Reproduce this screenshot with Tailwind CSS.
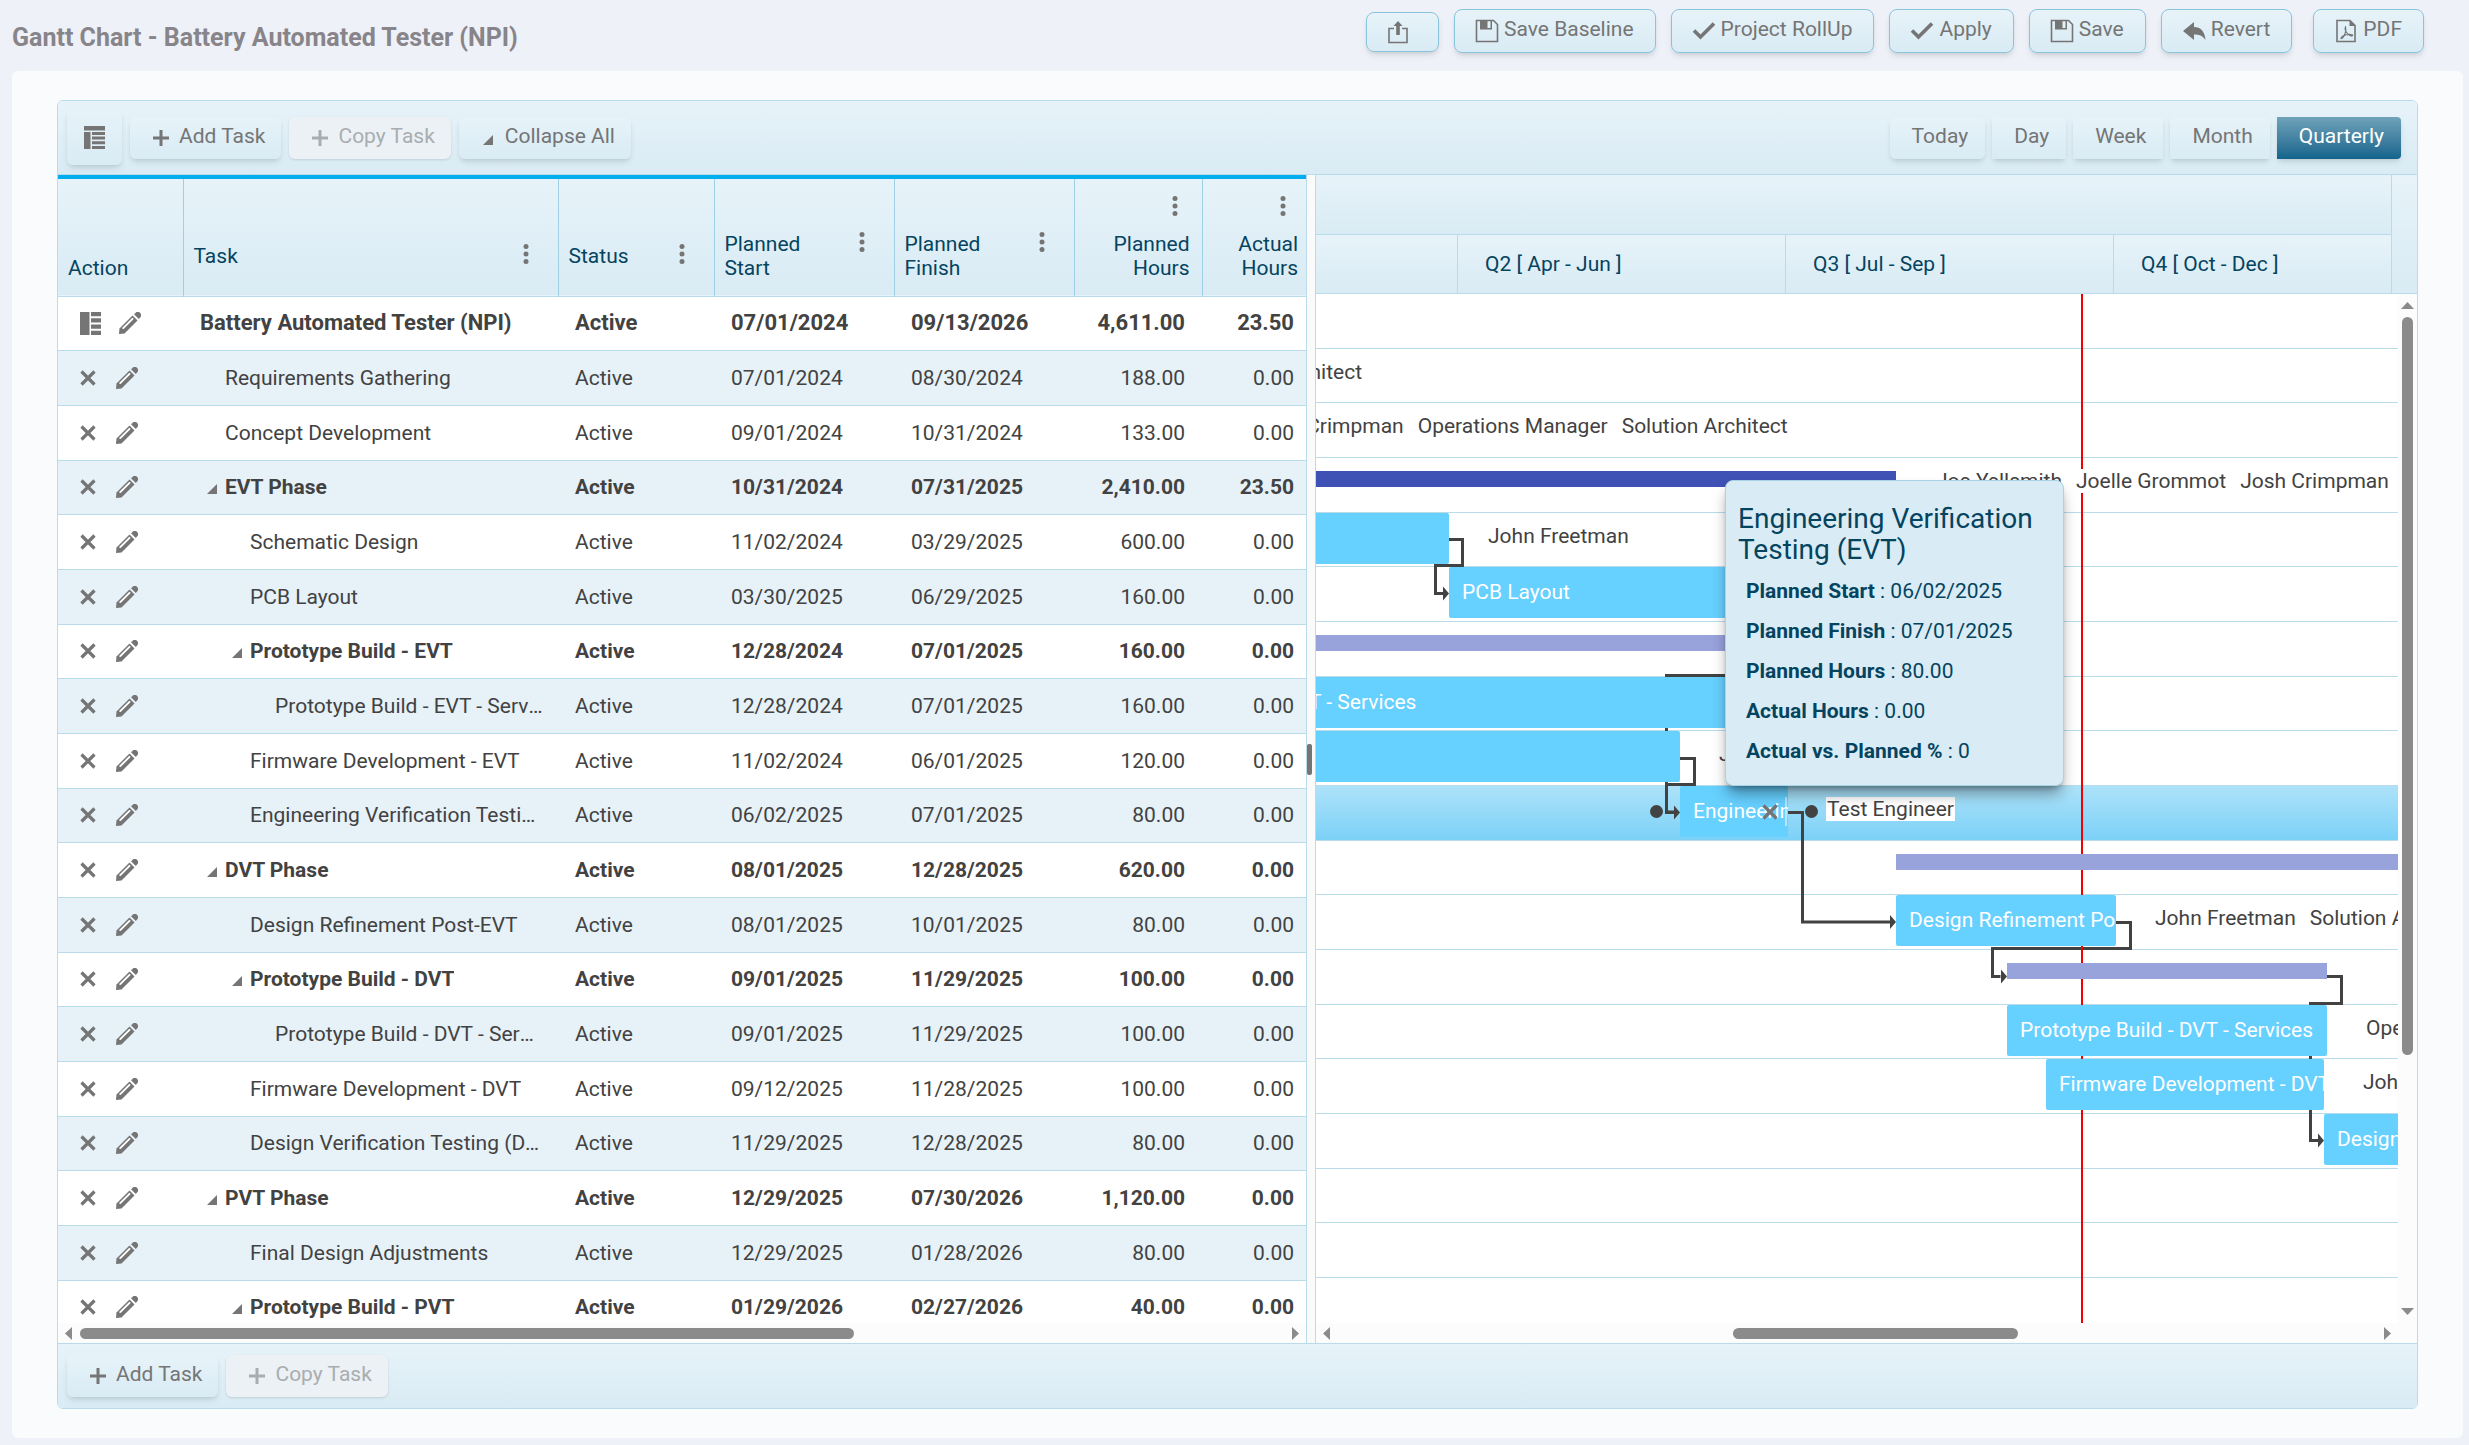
<!DOCTYPE html>
<html lang="en">
<head>
    <meta charset="UTF-8">
    <title>Gantt Chart - Battery Automated Tester (NPI)</title>
    <script src="https://cdn.jsdelivr.net/npm/@tailwindcss/browser@4"></script>
</head>
<body class="bg-[#eef1f7] h-screen flex flex-col overflow-hidden font-['Roboto',sans-serif] text-[21px] leading-6 text-[#424242]">

<!-- Icons -->
<svg class="hidden">
    <symbol id="i-share" viewBox="0 0 24 24"><path d="M8 8.500H3v14h18v-14h-5" fill="none" stroke="currentColor" stroke-width="1.600"/><path d="M12 1l4.500 5h-2.700v9h-3.600V6H7.500z" fill="currentColor"/></symbol>
    <symbol id="i-save" viewBox="0 0 24 24"><path d="M1.500 1.500h17l4 4v17h-21z" fill="none" stroke="currentColor" stroke-width="1.600"/><path d="M5 1.500h7.500V10H5zM15.500 1.500H17V10h-1.500zM5 9h12v1.400H5z" fill="currentColor"/></symbol>
    <symbol id="i-check" viewBox="0 0 24 24"><path d="M2 11.500l6.500 6.500L22 4.500" fill="none" stroke="currentColor" stroke-width="3.600"/></symbol>
    <symbol id="i-undo" viewBox="0 0 24 24"><path d="M1 12L12 3v5c6.500 0 11 4.500 11.500 13-3-4.500-6.500-5.500-11.500-5.500V21z" fill="currentColor"/></symbol>
    <symbol id="i-pdf" viewBox="0 0 24 24"><path d="M3 1.500h13l5 5v16H3z" fill="none" stroke="currentColor" stroke-width="1.600"/><path d="M15.500 1l6 6h-6z" fill="currentColor"/><path d="M11.500 8c-.8 1.500.2 4.500 2 6.500s4 3 5 2-3.500-1.500-6-.8-5.500 2.300-5.500 3.500 2-.2 3-2.200 2.400-6 1.500-9z" fill="none" stroke="currentColor" stroke-width="1.100"/></symbol>
    <symbol id="i-plus" viewBox="0 0 16 16"><path d="M8 0v16M0 8h16" stroke="currentColor" stroke-width="3"/></symbol>
    <symbol id="i-tri" viewBox="0 0 10 10"><path d="M10 0v10H0z" fill="currentColor"/></symbol>
    <symbol id="i-x" viewBox="0 0 16 16"><path d="M1.500 1.500l13 13M14.500 1.500l-13 13" stroke="currentColor" stroke-width="3.200"/></symbol>
    <symbol id="i-pencil" viewBox="0 0 22 22"><path d="M13.500 3.500l5 5L5.500 21.500 0 22l.5-5.500z" fill="currentColor"/><path d="M13.500 6.800L4.200 16.100" stroke="#fff" stroke-width="1.900" stroke-linecap="round"/><path d="M15 2.200L16.500.9a3.200 3.200 0 0 1 4.600 4.600L19.800 7z" fill="currentColor"/></symbol>
    <symbol id="i-layout" viewBox="0 0 21 23"><path d="M0 0h9.500v23H0zM11 0h10v4.300H11zM11 6.200h10v4.300H11zM11 12.500h10v4.300H11zM11 18.700h10V23H11z" fill="currentColor"/></symbol>
    <symbol id="i-columns" viewBox="0 0 21 23"><path d="M0 0h21v4.500H0zM0 6h6.500v17H0zM8 6h13v3H8zM8 10.500h13v3H8zM8 15.300h13v3H8zM8 20h13v3H8z" fill="currentColor"/></symbol>
    <symbol id="i-dots" viewBox="0 0 6 20"><circle cx="3" cy="2.500" r="2.500"/><circle cx="3" cy="10" r="2.500"/><circle cx="3" cy="17.500" r="2.500"/></symbol>
</svg>

<!-- Page header -->
<header class="h-[71px] shrink-0 flex items-start justify-between pl-3 pr-[45px] pt-[9px] text-[#757575]">
    <h1 class="text-[25px] leading-8 font-bold text-[#87848a] pt-[13px]">Gantt Chart - Battery Automated Tester (NPI)</h1>
    <div class="flex gap-[15px]">
        <button aria-label="Export" class="mt-[3px] h-10 w-[73px] pr-[10px] flex items-center justify-center rounded-lg border border-[#89c4dd] bg-linear-to-b from-[#e7f3f9] to-[#d9ebf4] shadow-md"><svg class="size-6"><use href="#i-share"/></svg></button>
        <button class="h-11 pl-5 pr-[21px] flex items-center gap-[5px] rounded-lg border border-[#89c4dd] bg-linear-to-b from-[#e7f3f9] to-[#d9ebf4] shadow-md"><svg class="size-6"><use href="#i-save"/></svg><span class="pb-1">Save Baseline</span></button>
        <button class="h-11 pl-5 pr-[21px] flex items-center gap-[5px] rounded-lg border border-[#89c4dd] bg-linear-to-b from-[#e7f3f9] to-[#d9ebf4] shadow-md"><svg class="size-6"><use href="#i-check"/></svg><span class="pb-1">Project RollUp</span></button>
        <button class="h-11 pl-5 pr-[21px] flex items-center gap-[5px] rounded-lg border border-[#89c4dd] bg-linear-to-b from-[#e7f3f9] to-[#d9ebf4] shadow-md"><svg class="size-6"><use href="#i-check"/></svg><span class="pb-1">Apply</span></button>
        <button class="h-11 pl-5 pr-[21px] flex items-center gap-[5px] rounded-lg border border-[#89c4dd] bg-linear-to-b from-[#e7f3f9] to-[#d9ebf4] shadow-md"><svg class="size-6"><use href="#i-save"/></svg><span class="pb-1">Save</span></button>
        <button class="h-11 pl-5 pr-[21px] flex items-center gap-[5px] rounded-lg border border-[#89c4dd] bg-linear-to-b from-[#e7f3f9] to-[#d9ebf4] shadow-md"><svg class="size-6"><use href="#i-undo"/></svg><span class="pb-1">Revert</span></button>
        <button class="ml-[6px] h-11 pl-5 pr-[21px] flex items-center gap-[5px] rounded-lg border border-[#89c4dd] bg-linear-to-b from-[#e7f3f9] to-[#d9ebf4] shadow-md"><svg class="size-6"><use href="#i-pdf"/></svg><span class="pb-1">PDF</span></button>
    </div>
</header>

<main class="flex-1 min-h-0 ml-3 mr-[6px] mb-[7px] pt-[29px] pl-[45px] pr-[45px] pb-[29px] bg-[#fafbfd] rounded-md flex">
    <section class="flex-1 min-w-0 flex flex-col border border-[#b9dcea] rounded-md overflow-hidden bg-white">

        <!-- Toolbar -->
        <div class="h-[74px] shrink-0 flex items-center gap-2 pl-[9px] pr-4 border-b border-[#b9dcea] bg-linear-to-b from-[#e7f3f9] to-[#d9ebf4] text-[#757575]">
            <button aria-label="Columns" class="h-[55px] w-[55px] flex items-center justify-center rounded-md bg-linear-to-b from-[#e7f3f9] to-[#d9ebf4] shadow-md"><svg class="w-[21px] h-[23px]"><use href="#i-columns"/></svg></button>
            <button class="h-[42px] pl-[23px] pr-4 flex items-center gap-[10px] rounded-md bg-linear-to-b from-[#e7f3f9] to-[#d9ebf4] shadow-md"><svg class="size-4"><use href="#i-plus"/></svg><span class="pb-1">Add Task</span></button>
            <button disabled class="h-[42px] pl-[23px] pr-4 flex items-center gap-[10px] rounded-md bg-[#ebf1f5] text-[#a9adb0] shadow-sm"><svg class="size-4"><use href="#i-plus"/></svg><span class="pb-1">Copy Task</span></button>
            <button class="h-[42px] pl-6 pr-4 flex items-center gap-3 rounded-md bg-linear-to-b from-[#e7f3f9] to-[#d9ebf4] shadow-md"><svg class="size-[10px] mt-1"><use href="#i-tri"/></svg><span class="pb-1">Collapse All</span></button>
            <div class="ml-auto flex gap-[7px]">
                <button class="h-[42px] pl-[22px] pr-[17px] pb-1 rounded-md bg-linear-to-b from-[#e7f3f9] to-[#d9ebf4] shadow-md">Today</button>
                <button class="h-[42px] pl-[22px] pr-[17px] pb-1 bg-linear-to-b from-[#e7f3f9] to-[#d9ebf4] shadow-md">Day</button>
                <button class="h-[42px] pl-[22px] pr-[17px] pb-1 bg-linear-to-b from-[#e7f3f9] to-[#d9ebf4] shadow-md">Week</button>
                <button class="h-[42px] pl-[22px] pr-[17px] pb-1 bg-linear-to-b from-[#e7f3f9] to-[#d9ebf4] shadow-md">Month</button>
                <button class="h-[42px] pl-[22px] pr-[17px] pb-1 rounded-r-sm bg-linear-to-b from-[#6fa3b9] to-[#10648c] text-white shadow-md">Quarterly</button>
            </div>
        </div>

        <div class="flex-1 min-h-0 flex">
            <!-- Task grid -->
            <div class="w-[1249px] shrink-0 flex flex-col border-r border-[#b9dcea]">
                <div class="flex-1 min-h-0 overflow-hidden">
                    <table class="w-[1248px] table-fixed">
                        <thead class="border-t-4 border-[#00aeef] text-[#05445f]">
                            <tr id="gridHeader" class="h-[119px] bg-linear-to-b from-[#e7f3f9] to-[#d9ebf4] border-b border-b-[#b9dcea]"></tr>
                        </thead>
                        <tbody id="taskRows"></tbody>
                    </table>
                </div>
                <div class="h-5 shrink-0 flex items-center bg-[#fcfcfc] pl-[7px] pr-[7px] text-[#8b8b8b]">
                    <svg class="w-[7px] h-[13px]" viewBox="0 0 7 13"><path d="M7 0v13L0 6.500z" fill="currentColor"/></svg>
                    <div class="ml-2 h-[11px] w-[774px] rounded-full bg-[#8b8b8b]"></div>
                    <svg class="ml-auto w-[7px] h-[13px]" viewBox="0 0 7 13"><path d="M0 0v13L7 6.500z" fill="currentColor"/></svg>
                </div>
            </div>

            <!-- Splitter -->
            <div class="w-2 shrink-0 flex items-center bg-[#fafafb]"><div class="w-[5px] h-[31px] rounded-xs bg-[#757575]"></div></div>

            <!-- Timeline -->
            <div class="relative flex-1 min-w-0 flex flex-col border-l border-[#b9dcea]">
                <div class="h-[119px] shrink-0 flex border-b border-[#b9dcea] bg-linear-to-b from-[#e7f3f9] to-[#d9ebf4] text-[#05445f]">
                    <div class="flex-1 min-w-0 flex flex-col">
                        <div class="h-[60px] border-b border-[#b9dcea] bg-linear-to-b from-[#e7f3f9] to-[#d9ebf4]"></div>
                        <div class="flex-1 flex items-center bg-linear-to-b from-[#e7f3f9] to-[#d9ebf4]">
                            <div class="w-[141px] h-full shrink-0"></div>
                            <div class="w-[328px] h-full shrink-0 flex items-center pl-[27px] border-l border-[#b9dcea]">Q2 [ Apr - Jun ]</div>
                            <div class="w-[328px] h-full shrink-0 flex items-center pl-[27px] border-l border-[#b9dcea]">Q3 [ Jul - Sep ]</div>
                            <div class="flex-1 h-full flex items-center pl-[27px] border-l border-[#b9dcea]">Q4 [ Oct - Dec ]</div>
                        </div>
                    </div>
                    <div class="w-[26px] border-l border-[#b9dcea]"></div>
                </div>
                <div class="flex-1 min-h-0 flex">
                    <div id="timeline" class="relative flex-1 min-w-0 overflow-hidden">
                        <div id="timelineRows"></div>

                        <!-- Dependencies -->
                        <svg class="absolute left-0 top-0 z-[5] w-[1082px] h-[1029px]" fill="none" stroke="#424242" stroke-width="3">
                            <path d="M133 245.500h13.500v26h-27v28h8"/>
                            <path d="M700 381.500H349M350.500 381v137h8"/>
                            <path d="M364 464.500h14.500v26h-28v28h8"/>
                            <path d="M472 518.500h14.500v109.500h88"/>
                            <path d="M800 628.500h14.500v26H676.500v28h8"/>
                            <path d="M1011 682.500h14.500v27H994.500v137h8"/>
                            <path d="M127 292.500l6 7-6 7zM358 511.500l6 7-6 7zM574 621l6 7-6 7zM685 675.500l6 7-6 7zM1002 839.500l6 7-6 7z" fill="#424242" stroke="none"/>
                        </svg>
                        <!-- Today -->
                        <div class="absolute left-[765px] top-0 bottom-0 w-[2px] z-[6] bg-[#f40000]"></div>
                        <!-- Selected task handles -->
                        <div class="absolute left-[334px] top-[511px] size-[13px] rounded-full bg-[#424242] z-20"></div>
                        <div class="absolute left-[489px] top-[511px] size-[13px] rounded-full bg-[#424242] z-20"></div>
                        <div class="absolute left-[469px] top-[503px] w-[2px] h-[29px] bg-white/50 z-20"></div>
                        <button aria-label="Remove" class="absolute left-[446px] top-[510px] z-20 text-[#757575]"><svg class="size-4"><use href="#i-x"/></svg></button>
                    </div>
                    <div class="w-[19px] shrink-0 flex flex-col items-center bg-[#fcfcfc] pt-2 pb-2 text-[#8b8b8b]">
                        <svg class="w-[13px] h-[7px]" viewBox="0 0 13 7"><path d="M0 7h13L6.500 0z" fill="currentColor"/></svg>
                        <div class="mt-2 w-[11px] h-[738px] rounded-full bg-[#8b8b8b]"></div>
                        <svg class="mt-auto w-[13px] h-[7px]" viewBox="0 0 13 7"><path d="M0 0h13L6.500 7z" fill="currentColor"/></svg>
                    </div>
                </div>
                <div class="h-5 shrink-0 flex items-center bg-[#fcfcfc] pl-[7px] pr-[26px] text-[#8b8b8b]">
                    <svg class="w-[7px] h-[13px]" viewBox="0 0 7 13"><path d="M7 0v13L0 6.500z" fill="currentColor"/></svg>
                    <div class="ml-[403px] h-[11px] w-[285px] rounded-full bg-[#8b8b8b]"></div>
                    <svg class="ml-auto w-[7px] h-[13px]" viewBox="0 0 7 13"><path d="M0 0v13L7 6.500z" fill="currentColor"/></svg>
                </div>

                <!-- Tooltip -->
                <div role="tooltip" class="absolute left-[409px] top-[305px] w-[339px] h-[306px] z-30 pt-[22px] px-3 rounded-lg border border-[#a9d3e6] bg-[#d9ebf5] text-[#05445f] shadow-lg shadow-black/40">
                    <div class="text-[28px] leading-[31px]">Engineering Verification Testing (EVT)</div>
                    <div class="pl-2 pt-[6px] leading-10">
                        <div><b>Planned Start</b> : 06/02/2025</div>
                        <div><b>Planned Finish</b> : 07/01/2025</div>
                        <div><b>Planned Hours</b> : 80.00</div>
                        <div><b>Actual Hours</b> : 0.00</div>
                        <div><b>Actual vs. Planned %</b> : 0</div>
                    </div>
                </div>
            </div>
        </div>

        <!-- Footer -->
        <div class="h-[65px] shrink-0 flex items-start gap-2 pl-[9px] pt-[11px] border-t border-[#b9dcea] bg-linear-to-b from-[#e7f3f9] to-[#d9ebf4] text-[#757575]">
            <button class="h-[42px] pl-[23px] pr-4 flex items-center gap-[10px] rounded-md bg-linear-to-b from-[#e7f3f9] to-[#d9ebf4] shadow-md"><svg class="size-4"><use href="#i-plus"/></svg><span class="pb-1">Add Task</span></button>
            <button disabled class="h-[42px] pl-[23px] pr-4 flex items-center gap-[10px] rounded-md bg-[#ebf1f5] text-[#a9adb0] shadow-sm"><svg class="size-4"><use href="#i-plus"/></svg><span class="pb-1">Copy Task</span></button>
        </div>
    </section>
</main>

<script>
    const columns = [
        { title: "Action", cls: "w-[125px] pb-4 align-bottom" },
        { title: "Task", cls: "w-[375px] pb-7 align-bottom", menu: true },
        { title: "Status", cls: "w-[156px] pb-7 align-bottom", menu: true },
        { title: "Planned Start", cls: "w-[180px] pb-4 align-bottom", menu: true },
        { title: "Planned Finish", cls: "w-[180px] pb-4 align-bottom", menu: true },
        { title: "Planned Hours", cls: "w-[128px] pb-4 pr-3 align-bottom", menu: true, num: true },
        { title: "Actual Hours", cls: "w-[104px] pb-4 pr-2 align-bottom", menu: true, num: true }
    ];

    // bar: [start, end] in timeline pixels, people: resources drawn from x = at
    const tasks = [
        { name: "Battery Automated Tester (NPI)", level: 0, root: true, bold: true, start: "07/01/2024", finish: "09/13/2026", hours: "4,611.00", actual: "23.50" },
        { name: "Requirements Gathering", level: 1, start: "07/01/2024", finish: "08/30/2024", hours: "188.00", actual: "0.00", at: -121, people: ["Solution Architect"] },
        { name: "Concept Development", level: 1, start: "09/01/2024", finish: "10/31/2024", hours: "133.00", actual: "0.00", at: -62, people: ["Josh Crimpman", "Operations Manager", "Solution Architect"] },
        { name: "EVT Phase", level: 1, bold: true, start: "10/31/2024", finish: "07/31/2025", hours: "2,410.00", actual: "23.50", bar: [-500, 580], kind: "actual", at: 619, people: ["Joe Yellsmith", "Joelle Grommot", "Josh Crimpman"] },
        { name: "Schematic Design", level: 2, start: "11/02/2024", finish: "03/29/2025", hours: "600.00", actual: "0.00", bar: [-400, 133], label: "", at: 171, people: ["John Freetman"] },
        { name: "PCB Layout", level: 2, start: "03/30/2025", finish: "06/29/2025", hours: "160.00", actual: "0.00", bar: [133, 462], label: "PCB Layout" },
        { name: "Prototype Build - EVT", level: 2, bold: true, start: "12/28/2024", finish: "07/01/2025", hours: "160.00", actual: "0.00", bar: [-200, 472], kind: "summary" },
        { name: "Prototype Build - EVT - Services", level: 3, start: "12/28/2024", finish: "07/01/2025", hours: "160.00", actual: "0.00", bar: [-204, 472], label: "Prototype Build - EVT - Services" },
        { name: "Firmware Development - EVT", level: 2, start: "11/02/2024", finish: "06/01/2025", hours: "120.00", actual: "0.00", bar: [-400, 364], label: "", at: 402, people: ["John Freetman"] },
        { name: "Engineering Verification Testing (EVT)", level: 2, selected: true, start: "06/02/2025", finish: "07/01/2025", hours: "80.00", actual: "0.00", bar: [364, 472], label: "Engineering Verification Testing (EVT)", at: 510, people: ["Test Engineer"] },
        { name: "DVT Phase", level: 1, bold: true, start: "08/01/2025", finish: "12/28/2025", hours: "620.00", actual: "0.00", bar: [580, 1120], kind: "summary" },
        { name: "Design Refinement Post-EVT", level: 2, start: "08/01/2025", finish: "10/01/2025", hours: "80.00", actual: "0.00", bar: [580, 800], label: "Design Refinement Post-EVT", at: 838, people: ["John Freetman", "Solution Architect"] },
        { name: "Prototype Build - DVT", level: 2, bold: true, start: "09/01/2025", finish: "11/29/2025", hours: "100.00", actual: "0.00", bar: [691, 1011], kind: "summary" },
        { name: "Prototype Build - DVT - Services", level: 3, start: "09/01/2025", finish: "11/29/2025", hours: "100.00", actual: "0.00", bar: [691, 1011], label: "Prototype Build - DVT - Services", at: 1049, people: ["Operations Manager"] },
        { name: "Firmware Development - DVT", level: 2, start: "09/12/2025", finish: "11/28/2025", hours: "100.00", actual: "0.00", bar: [730, 1008], label: "Firmware Development - DVT", at: 1046, people: ["John Freetman"] },
        { name: "Design Verification Testing (DVT)", level: 2, start: "11/29/2025", finish: "12/28/2025", hours: "80.00", actual: "0.00", bar: [1008, 1115], label: "Design Verification Testing (DVT)" },
        { name: "PVT Phase", level: 1, bold: true, start: "12/29/2025", finish: "07/30/2026", hours: "1,120.00", actual: "0.00" },
        { name: "Final Design Adjustments", level: 2, start: "12/29/2025", finish: "01/28/2026", hours: "80.00", actual: "0.00" },
        { name: "Prototype Build - PVT", level: 2, bold: true, start: "01/29/2026", finish: "02/27/2026", hours: "40.00", actual: "0.00" }
    ];

    document.getElementById("gridHeader").innerHTML = columns.map(c => {
        const dots = c.menu ? `<button aria-label="${c.title} menu" class="text-[#757575]"><svg class="w-[6px] h-5 fill-current"><use href="#i-dots"/></svg></button>` : "";
        if (c.num) {
            return `<th class="${c.cls} pl-2 font-normal text-right border-r border-r-[#9fd0e3] last:border-r-0"><div class="flex justify-end pr-3 pb-4">${dots}</div>${c.title.replace(" ", "<br>")}</th>`;
        }
        return `<th class="${c.cls} pl-[10px] pr-[29px] font-normal text-left border-r border-r-[#9fd0e3]"><div class="flex justify-between items-start"><span>${c.title.replace(" ", "<br>")}</span>${dots}</div></th>`;
    }).join("");

    document.getElementById("taskRows").innerHTML = tasks.map(t => {
        const open = t.bold && !t.root;
        const indent = 17 + 25 * t.level - (open ? 18 : 0);
        const icons = t.root
            ? `<button aria-label="Details"><svg class="w-[21px] h-[23px]"><use href="#i-layout"/></svg></button><button aria-label="Edit"><svg class="size-[22px]"><use href="#i-pencil"/></svg></button>`
            : `<button aria-label="Delete"><svg class="size-4"><use href="#i-x"/></svg></button><button aria-label="Edit"><svg class="size-[22px]"><use href="#i-pencil"/></svg></button>`;
        return `
            <tr class="h-[55px] nth-[3n+1]:h-[54px] even:bg-[#e6f1f8] border-b border-[#b9dcea] ${t.bold ? "font-bold" : ""} ${t.root ? "text-[22px]" : ""}">
                <td><div class="flex items-center pl-[22px] text-[#757575] ${t.root ? "gap-[18px]" : "gap-5"}">${icons}</div></td>
                <td class="pr-[14px]"><div class="flex items-center" style="padding-left:${indent}px">${open ? `<svg class="w-[10px] h-[10px] mr-2 mt-1 shrink-0 text-[#757575]"><use href="#i-tri"/></svg>` : ""}<span class="truncate">${t.name}</span></div></td>
                <td class="pl-[17px]">Active</td>
                <td class="pl-[17px]">${t.start}</td>
                <td class="pl-[17px]">${t.finish}</td>
                <td class="pr-[17px] text-right">${t.hours}</td>
                <td class="pr-3 text-right">${t.actual}</td>
            </tr>`;
    }).join("");

    const barStyles = {
        task: "absolute top-0 h-[51px] z-10 pl-[13px] pt-[13px] rounded-xs overflow-hidden whitespace-nowrap text-white bg-[#66d0ff]",
        summary: "absolute top-[13px] h-4 z-10 bg-[#98a2db]",
        actual: "absolute top-[13px] h-4 z-10 bg-[#3f51b5]"
    };

    document.getElementById("timelineRows").innerHTML = tasks.map(t => {
        const bar = t.bar ? `<div class="${barStyles[t.kind || "task"]}" style="left:${t.bar[0]}px;width:${t.bar[1] - t.bar[0]}px">${t.label || ""}</div>` : "";
        const people = t.people ? `<div class="absolute top-[11px] z-10 flex gap-3 whitespace-nowrap" style="left:${t.at}px">${t.people.map(p => `<span class="bg-white px-px">${p}</span>`).join("")}</div>` : "";
        return `<div class="relative h-[55px] nth-[3n+2]:h-[54px] border-b border-[#b9dcea] ${t.selected ? "bg-linear-to-b from-[#ade2f9] to-[#7bd1f7]" : ""}">${bar}${people}</div>`;
    }).join("");
</script>
</body>
</html>
